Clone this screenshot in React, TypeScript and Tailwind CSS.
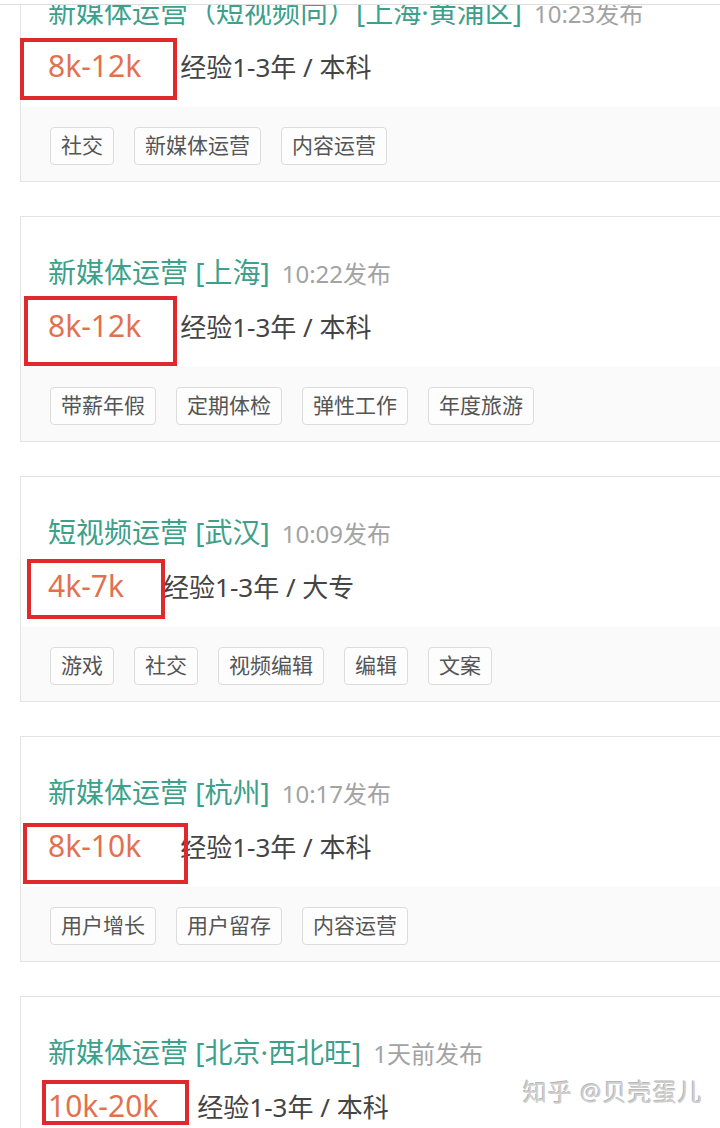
type Job = {
  title: string;
  time: string;
  salary: string;
  exp: string;
  tags: string[];
  // red annotation box, relative to the card's top-left corner
  box: { left: number; top: number; width: number; height: number };
};

const jobs: Job[] = [
  {
    title: "新媒体运营（短视频向）[上海·黄浦区]",
    time: "10:23发布",
    salary: "8k-12k",
    exp: "经验1-3年 / 本科",
    tags: ["社交", "新媒体运营", "内容运营"],
    box: { left: -1, top: 81, width: 157, height: 62 },
  },
  {
    title: "新媒体运营 [上海]",
    time: "10:22发布",
    salary: "8k-12k",
    exp: "经验1-3年 / 本科",
    tags: ["带薪年假", "定期体检", "弹性工作", "年度旅游"],
    box: { left: 3, top: 79, width: 153, height: 70 },
  },
  {
    title: "短视频运营 [武汉]",
    time: "10:09发布",
    salary: "4k-7k",
    exp: "经验1-3年 / 大专",
    tags: ["游戏", "社交", "视频编辑", "编辑", "文案"],
    box: { left: 6, top: 82, width: 138, height: 60 },
  },
  {
    title: "新媒体运营 [杭州]",
    time: "10:17发布",
    salary: "8k-10k",
    exp: "经验1-3年 / 本科",
    tags: ["用户增长", "用户留存", "内容运营"],
    box: { left: 2, top: 86, width: 165, height: 61 },
  },
  {
    title: "新媒体运营 [北京·西北旺]",
    time: "1天前发布",
    salary: "10k-20k",
    exp: "经验1-3年 / 本科",
    tags: [],
    box: { left: 21, top: 83, width: 147, height: 45 },
  },
];

function JobCard({ job }: { job: Job }) {
  return (
    <div className="relative ml-[20px] mb-[34px] w-[720px] border border-[#e4e4e4] bg-white">
      {/* upper part: title + salary */}
      <div className="h-[150px] pl-[27px] pt-[37px]">
        <div className="flex items-baseline whitespace-nowrap leading-[36px]">
          <span className="text-[28px] text-[#3da08a]">{job.title}</span>
          <span className="ml-[12px] text-[24px] text-[#a3a3a3]">{job.time}</span>
        </div>
        <div className="mt-[14px] flex items-baseline whitespace-nowrap leading-[40px]">
          <span className="mr-[39px] text-[30px] text-[#e2714f]">{job.salary}</span>
          <span className="text-[26px] text-[#444]">{job.exp}</span>
        </div>
      </div>

      {/* tag band */}
      <div className="h-[74px] bg-[#fafafa] pl-[29px] pt-[20px]">
        <div className="flex gap-[20px]">
          {job.tags.map((t) => (
            <span
              key={t}
              className="flex h-[38px] items-center rounded-[4px] border border-[#dcdcdc] bg-[#fdfdfd] px-[10px] text-[21px] text-[#555]"
            >
              {t}
            </span>
          ))}
        </div>
      </div>

      {/* red annotation */}
      <div
        className="absolute border-[4px] border-[#e0292c]"
        style={{
          left: job.box.left,
          top: job.box.top,
          width: job.box.width,
          height: job.box.height,
        }}
      />
    </div>
  );
}

export default function App() {
  return (
    <div
      className="relative h-[1128px] w-[720px] overflow-hidden bg-white"
      style={{ fontFamily: '"Noto Sans", "Noto Sans CJK SC", sans-serif' }}
    >
      {/* top edge of the list */}
      <div className="relative z-10 h-[5px] border-b border-[#dedede] bg-white" />

      <div className="-mt-[49px]">
        {jobs.map((j) => (
          <JobCard key={j.title} job={j} />
        ))}
      </div>

      {/* watermark */}
      <div className="absolute left-[523px] top-[1074px] text-[24px] tracking-[1px] text-[#cfcfcf] [text-shadow:1px_1px_0_#ffffff,-1px_-1px_0_#b8b8b8]">
        知乎 @贝壳蛋儿
      </div>
    </div>
  );
}
